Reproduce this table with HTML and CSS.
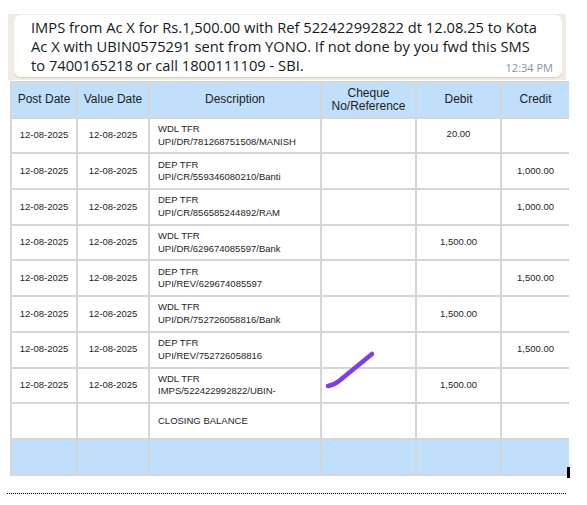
FILE: index.html
```html
<!DOCTYPE html>
<html>
<head>
<meta charset="utf-8">
<link rel="stylesheet" href="styles.css">
</head>
<body>
<div class="page">
  <div class="chat">
    <div class="bubble">
      <p class="msg">IMPS from Ac X for Rs.1,500.00 with Ref 522422992822 dt 12.08.25 to Kota<br>Ac X with UBIN0575291 sent from YONO. If not done by you fwd this SMS<br>to 7400165218 or call 1800111109 - SBI.</p>
      <span class="time">12:34 PM</span>
    </div>
  </div>
  <div class="statement">
    <table class="tbl">
      <colgroup>
        <col class="c1"><col class="c2"><col class="c3"><col class="c4"><col class="c5"><col class="c6">
      </colgroup>
      <thead>
        <tr><th>Post Date</th><th>Value Date</th><th>Description</th><th>Cheque<br>No/Reference</th><th>Debit</th><th>Credit</th></tr>
      </thead>
      <tbody>
        <tr><td>12-08-2025</td><td>12-08-2025</td><td class="desc">WDL TFR<br>UPI/DR/781268751508/MANISH</td><td></td><td class="amt up">20.00</td><td></td></tr>
        <tr><td>12-08-2025</td><td>12-08-2025</td><td class="desc">DEP TFR<br>UPI/CR/559346080210/Banti</td><td></td><td></td><td class="amt">1,000.00</td></tr>
        <tr><td>12-08-2025</td><td>12-08-2025</td><td class="desc">DEP TFR<br>UPI/CR/856585244892/RAM</td><td></td><td></td><td class="amt">1,000.00</td></tr>
        <tr><td>12-08-2025</td><td>12-08-2025</td><td class="desc">WDL TFR<br>UPI/DR/629674085597/Bank</td><td></td><td class="amt">1,500.00</td><td></td></tr>
        <tr><td>12-08-2025</td><td>12-08-2025</td><td class="desc">DEP TFR<br>UPI/REV/629674085597</td><td></td><td></td><td class="amt">1,500.00</td></tr>
        <tr><td>12-08-2025</td><td>12-08-2025</td><td class="desc">WDL TFR<br>UPI/DR/752726058816/Bank</td><td></td><td class="amt">1,500.00</td><td></td></tr>
        <tr><td>12-08-2025</td><td>12-08-2025</td><td class="desc">DEP TFR<br>UPI/REV/752726058816</td><td></td><td></td><td class="amt">1,500.00</td></tr>
        <tr><td>12-08-2025</td><td>12-08-2025</td><td class="desc">WDL TFR<br>IMPS/522422992822/UBIN-</td><td></td><td class="amt">1,500.00</td><td></td></tr>
        <tr><td></td><td></td><td class="desc">CLOSING BALANCE</td><td></td><td></td><td></td></tr>
        <tr class="foot"><td></td><td></td><td></td><td></td><td></td><td></td></tr>
      </tbody>
    </table>
    <svg class="tick" width="60" height="45" viewBox="0 0 60 45"><path d="M3 37 Q9 36 14 32 L47 5" fill="none" stroke="#7b3cf2" stroke-width="4.5" stroke-linecap="round" stroke-linejoin="round"/></svg>
    <span class="cursor"></span>
  </div>
  <div class="rule"></div>
</div>
</body>
</html>
```
FILE: styles.css
```css
html, body { margin: 0; padding: 0; background: #fff; }
.page { width: 587px; height: 505px; position: relative; }
.chat {
  margin: 14px 0 0 8px;
  width: 558px;
  height: 66px;
  background: #efeae2;
  padding: 1px 4px 0 6px;
  box-sizing: border-box;
}
.bubble {
  position: relative;
  background: #fff;
  border-radius: 7px;
  height: 62px;
  box-shadow: 0 1px 1px rgba(0,0,0,0.12);
  padding: 3px 0 0 17px;
  box-sizing: border-box;
}
.msg {
  margin: 0;
  font-family: "Open Sans", sans-serif;
  font-size: 14.7px;
  line-height: 19px;
  color: #111b21;
}
.time {
  position: absolute;
  right: 9px;
  bottom: 2px;
  font-family: "Open Sans", sans-serif;
  font-size: 11px;
  color: #8696a0;
}
.statement { position: relative; margin: 1px 0 0 10px; width: 558px; }
.tbl {
  width: 558px;
  table-layout: fixed;
  border-collapse: collapse;
  font-family: "Liberation Sans", Arial, sans-serif;
  color: #1e1e1e;
}
.c1 { width: 66px; } .c2 { width: 72px; } .c3 { width: 172px; }
.c4 { width: 95px; } .c5 { width: 85px; } .c6 { width: 68px; }
.tbl th, .tbl td {
  border: 2px solid #d6d6d6;
  height: 35.7px;
  padding: 0;
  box-sizing: border-box;
  text-align: center;
  vertical-align: middle;
}
.tbl tr > :last-child { border-right: none; }
.tbl th {
  background: #bfdffb;
  font-weight: normal;
  font-size: 12px;
  line-height: 13px;
}
.tbl td { font-size: 9.5px; line-height: 12.5px; }
.tbl td.desc { text-align: left; padding-left: 8px; }
.tbl td.up { padding-bottom: 2px; }
.tbl tr.foot td { background: #bfdffb; }
.tick { position: absolute; left: 315px; top: 268px; }
.cursor { position: absolute; left: 557px; top: 386px; width: 3px; height: 11px; background: #000; }
.rule { margin: 17px 0 0 7px; width: 559px; border-top: 1px dotted #000; }
```
